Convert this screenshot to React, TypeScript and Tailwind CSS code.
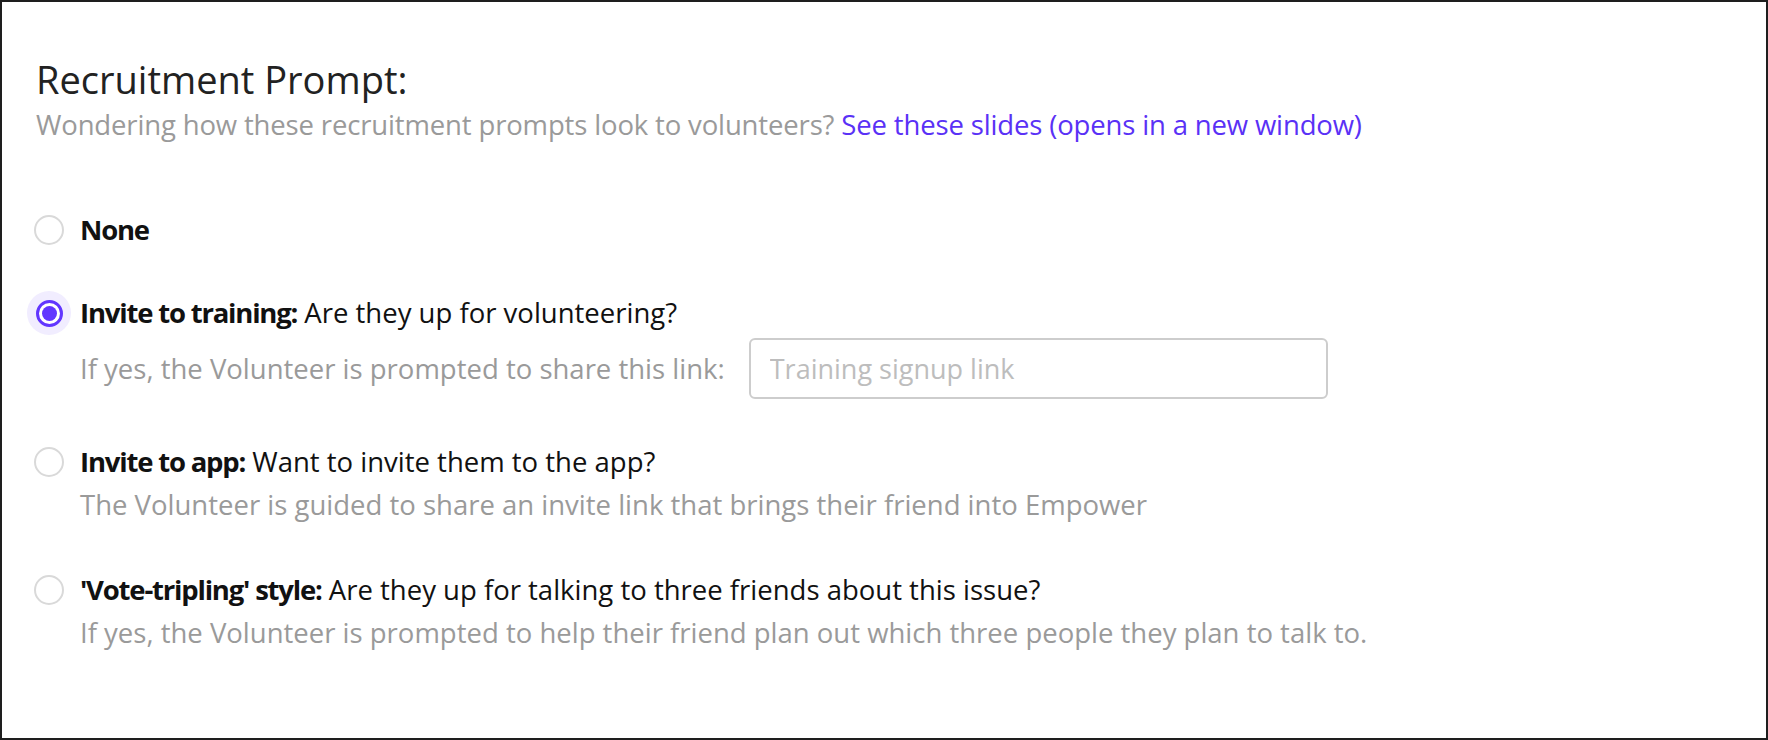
import React from "react";

const options = [
	{
		id: "none",
		label: "None",
		question: "",
		description: "",
	},
	{
		id: "training",
		label: "Invite to training:",
		question: "Are they up for volunteering?",
		description: "If yes, the Volunteer is prompted to share this link:",
	},
	{
		id: "app",
		label: "Invite to app:",
		question: "Want to invite them to the app?",
		description:
			"The Volunteer is guided to share an invite link that brings their friend into Empower",
	},
	{
		id: "tripling",
		label: "'Vote-tripling' style:",
		question: "Are they up for talking to three friends about this issue?",
		description:
			"If yes, the Volunteer is prompted to help their friend plan out which three people they plan to talk to.",
	},
];

function Radio({ checked }: { checked: boolean }) {
	if (checked) {
		return (
			<span className="flex items-center justify-center w-[30px] h-[30px] shrink-0 rounded-full bg-[#f1edff] shadow-[0_0_0_7px_#f1edff]">
				<span className="flex items-center justify-center w-[27px] h-[27px] rounded-full border-[3px] border-[#6236ff] bg-white">
					<span className="w-[15px] h-[15px] rounded-full bg-[#6236ff]" />
				</span>
			</span>
		);
	}
	return (
		<span className="w-[30px] h-[30px] shrink-0 rounded-full border-2 border-[#d9d9d9] bg-white" />
	);
}

export default function App() {
	const selected = "training";

	return (
		<div
			className="w-full h-[740px] border-2 border-[#1e1e1e] bg-white pl-[32px] pt-[55px]"
			style={{ fontFamily: "'Open Sans', 'Liberation Sans', sans-serif" }}
		>
			{/* header */}
			<h2 className="pl-[2px] text-[38px] leading-[44px] text-[#222]">
				Recruitment Prompt:
			</h2>
			<p className="pl-[2px] mt-2 text-[27.5px] leading-[32px] tracking-[-0.15px] text-[#9a9a9a]">
				Wondering how these recruitment prompts look to volunteers?{" "}
				<a className="text-[#5a31f6]">See these slides (opens in a new window)</a>
			</p>

			{/* options */}
			<div className="flex flex-col mt-[73px]">
				{options.map((o, i) => (
					<div
						key={o.id}
						className={
							i === 0 ? "" : i === 1 ? "mt-[51px]" : i === 2 ? "mt-[47px]" : "mt-[53px]"
						}
					>
						<div className="flex items-center gap-[16px] h-[32px]">
							<Radio checked={selected === o.id} />
							<span className="text-[27.5px] leading-[32px] text-[#111]">
								<b className="font-bold tracking-[-1.2px]">{o.label}</b>
								{o.question && " " + o.question}
							</span>
						</div>
						{o.id === "training" && (
							<div className="flex items-center gap-[24px] mt-[9px] pl-[46px]">
								<span className="text-[27.5px] leading-[32px] text-[#9a9a9a]">
									{o.description}
								</span>
								<input
									placeholder="Training signup link"
									className="w-[579px] h-[61px] px-[19px] rounded-[6px] border-2 border-[#cdcdcd] text-[27px] text-[#333] placeholder:text-[#bdbdbd] outline-none"
								/>
							</div>
						)}
						{o.description && o.id !== "training" && (
							<p className="pl-[46px] mt-[11px] text-[27.5px] leading-[32px] text-[#9a9a9a]">
								{o.description}
							</p>
						)}
					</div>
				))}
			</div>
		</div>
	);
}
